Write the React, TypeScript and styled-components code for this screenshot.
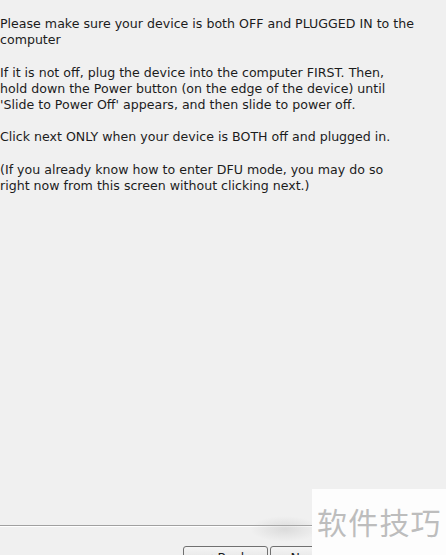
import * as React from 'react';
import styled, { createGlobalStyle } from 'styled-components';

const GlobalStyle = createGlobalStyle`
  html, body {
    margin: 0;
    padding: 0;
    background: #f0f0f0;
  }
`;

const Window = styled.div`
  position: relative;
  width: 446px;
  height: 555px;
  overflow: hidden;
  display: flex;
  flex-direction: column;
  background: #f0f0f0;
  font-family: Tahoma, 'DejaVu Sans', Verdana, sans-serif;
  color: #1c1c1c;
`;

const Content = styled.div`
  flex: 1;
  padding: 16px 0 0 0;
  font-size: 12.6px;
  line-height: 16.2px;
`;

const Paragraph = styled.p`
  margin: 0 0 16.2px 0;
  white-space: pre-line;
`;

const Separator = styled.div`
  height: 0;
  border-top: 1px solid #a0a0a0;
  border-bottom: 1px solid #ffffff;
  margin-bottom: 19px;
`;

const ButtonRow = styled.div`
  display: flex;
  padding-left: 183px;
  gap: 2px;
  height: 9px;
`;

const Button = styled.button`
  width: 85px;
  height: 23px;
  padding: 0;
  border: 1px solid #707070;
  border-radius: 3px;
  background: linear-gradient(#f4f4f4, #dddddd);
  font-family: inherit;
  font-size: 12.6px;
  color: #1c1c1c;
  text-align: center;
  line-height: 20px;
`;

const Smudge = styled.div`
  position: absolute;
  left: 250px;
  top: 516px;
  width: 70px;
  height: 26px;
  background: radial-gradient(ellipse at center, rgba(180, 180, 180, 0.35), rgba(240, 240, 240, 0) 70%);
`;

const Watermark = styled.div`
  position: absolute;
  left: 312px;
  top: 489px;
  right: 0;
  bottom: 0;
  background: #fdfdfd;
  color: #bdbdbd;
  font-family: 'Noto Sans CJK SC', sans-serif;
  font-size: 30px;
  line-height: 32px;
  letter-spacing: 1.2px;
  white-space: nowrap;
  padding: 16px 0 0 5px;
`;

export default function App() {
  return (
    <>
      <GlobalStyle />
      <Window>
        <Content>
          <Paragraph>
            {'Please make sure your device is both OFF and PLUGGED IN to the\ncomputer'}
          </Paragraph>
          <Paragraph>
            {'If it is not off, plug the device into the computer FIRST. Then,\nhold down the Power button (on the edge of the device) until\n\'Slide to Power Off\' appears, and then slide to power off.'}
          </Paragraph>
          <Paragraph>Click next ONLY when your device is BOTH off and plugged in.</Paragraph>
          <Paragraph>
            {'(If you already know how to enter DFU mode, you may do so\nright now from this screen without clicking next.)'}
          </Paragraph>
        </Content>
        <Separator />
        <ButtonRow>
          <Button>&lt; Back</Button>
          <Button>Next &gt;</Button>
        </ButtonRow>
        <Smudge />
        <Watermark>软件技巧</Watermark>
      </Window>
    </>
  );
}
